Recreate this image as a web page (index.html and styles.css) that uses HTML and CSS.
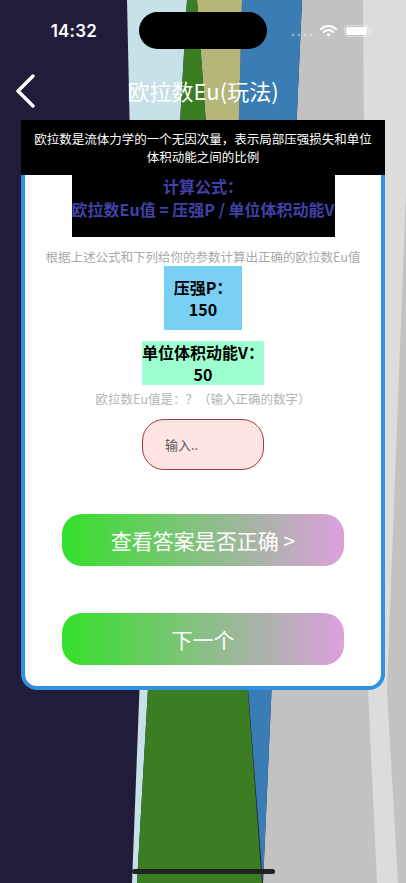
FILE: index.html
```html
<!DOCTYPE html>
<html lang="zh-CN">
<head>
<meta charset="UTF-8">
<meta name="viewport" content="width=device-width, initial-scale=1.0">
<title>欧拉数Eu(玩法)</title>
<link rel="stylesheet" href="styles.css">
</head>
<body>
<div class="screen">
    <!-- backdrop shards -->
    <svg class="backdrop" width="406" height="883" viewBox="0 0 406 883">
        <rect width="406" height="883" fill="#221c3b"/>
        <polygon points="302,0 406,0 406,883 263,883" fill="#c2c2c2"/>
        <polygon points="363,0 406,0 406,190 387,690 398,883 377,883 368,690" fill="#dcdcdc"/>
        <polygon points="242,0 302,0 263,883 230,455" fill="#3a7db4"/>
        <polygon points="197,0 242,0 230,455" fill="#b6b67b"/>
        <polygon points="127,0 187,0 137,883 132,883 141,650" fill="#c6e1e7"/>
        <polygon points="187,0 197,0 262,883 137,883" fill="#3a7d23"/>
    </svg>

    <div class="status-bar">
        <span class="clock">14:32</span>
        <div class="island"></div>
        <div class="status-icons">
            <svg width="22" height="6" viewBox="0 0 22 6">
                <circle cx="2" cy="3" r="1.6" fill="rgba(255,255,255,0.35)"/>
                <circle cx="8" cy="3" r="1.6" fill="rgba(255,255,255,0.35)"/>
                <circle cx="14" cy="3" r="1.6" fill="rgba(255,255,255,0.35)"/>
                <circle cx="20" cy="3" r="1.6" fill="rgba(255,255,255,0.35)"/>
            </svg>
            <svg width="17" height="12" viewBox="0 0 17 12">
                <path d="M1 4.2 A10.5 10.5 0 0 1 16 4.2" fill="none" stroke="#fff" stroke-width="2" stroke-linecap="round"/>
                <path d="M3.8 7 A6.6 6.6 0 0 1 13.2 7" fill="none" stroke="#fff" stroke-width="2" stroke-linecap="round"/>
                <path d="M6.2 9.6 L8.5 11.8 L10.8 9.6 A3.3 3.3 0 0 0 6.2 9.6 Z" fill="#fff"/>
            </svg>
            <svg width="28" height="12" viewBox="0 0 28 12">
                <rect x="0.5" y="0.5" width="24" height="11" rx="3.5" fill="none" stroke="rgba(255,255,255,0.45)"/>
                <rect x="2" y="2" width="21" height="8" rx="2.2" fill="#fff"/>
                <path d="M26 4 A2 2 0 0 1 26 8 Z" fill="rgba(255,255,255,0.45)"/>
            </svg>
        </div>
    </div>

    <div class="nav-bar">
        <svg class="back" width="22" height="34" viewBox="0 0 22 34">
            <polyline points="18,2 3,17 18,32" fill="none" stroke="#fff" stroke-width="3.4" stroke-linecap="round" stroke-linejoin="round"/>
        </svg>
        <h1 class="nav-title">欧拉数Eu(玩法)</h1>
    </div>

    <div class="intro">欧拉数是流体力学的一个无因次量，表示局部压强损失和单位体积动能之间的比例</div>

    <div class="card">
        <div class="formula">
            <div>计算公式：</div>
            <div>欧拉数Eu值 = 压强P / 单位体积动能V</div>
        </div>
        <p class="hint">根据上述公式和下列给你的参数计算出正确的欧拉数Eu值</p>
        <div class="param param-pressure">
            <div>压强P：</div>
            <div>150</div>
        </div>
        <div class="param param-energy">
            <div>单位体积动能V：</div>
            <div>50</div>
        </div>
        <p class="hint hint-answer">欧拉数Eu值是：？（输入正确的数字）</p>
        <input class="answer" type="text" placeholder="输入..">
        <button class="grad-button check">查看答案是否正确 &gt;</button>
        <button class="grad-button next">下一个</button>
    </div>

    <div class="home-bar"></div>
</div>
</body>
</html>
```

FILE: styles.css
```css
body {
    margin: 0;
    background-color: #221c3b;
    font-family: "Noto Sans CJK SC", "Noto Sans", sans-serif;
}
.screen {
    position: relative;
    width: 406px;
    height: 883px;
    overflow: hidden;
    display: flex;
    flex-direction: column;
}
.backdrop {
    position: absolute;
    left: 0;
    top: 0;
    z-index: 0;
}
.status-bar,
.nav-bar,
.intro,
.card,
.home-bar {
    position: relative;
    z-index: 1;
}
.status-bar {
    display: grid;
    grid-template-columns: 1fr 128px 1fr;
    align-items: center;
    padding-top: 12px;
    height: 37px;
}
.clock {
    justify-self: end;
    margin-right: 42px;
    color: white;
    font-family: Inter, "Liberation Sans", sans-serif;
    font-weight: 600;
    font-size: 17px;
    letter-spacing: 0.2px;
}
.island {
    width: 128px;
    height: 37px;
    border-radius: 19px;
    background-color: black;
}
.status-icons {
    display: flex;
    align-items: center;
    gap: 7px;
    padding-left: 24px;
    margin-top: 1px;
}
.status-icons svg:first-child {
    margin-top: 8px;
}
.nav-bar {
    margin-top: 11px;
    height: 60px;
    display: flex;
    align-items: center;
    justify-content: center;
}
.back {
    position: absolute;
    left: 15px;
    top: 14px;
}
.nav-title {
    margin: 0;
    color: white;
    font-size: 22px;
    font-weight: 400;
}
.intro {
    width: 348px;
    margin: 0 auto;
    padding: 10px 8px 9px;
    background-color: black;
    color: white;
    font-size: 12.5px;
    line-height: 18px;
    text-align: center;
}
.card {
    width: 356px;
    margin: 0 auto;
    padding-bottom: 21px;
    background-color: white;
    border: 4px solid #3091e2;
    border-top: none;
    border-radius: 0 0 16px 16px;
    display: flex;
    flex-direction: column;
    align-items: center;
}
.formula {
    width: 263px;
    padding-bottom: 16px;
    background-color: black;
    color: #4141a8;
    font-size: 16px;
    font-weight: 700;
    line-height: 23px;
    text-align: center;
    white-space: nowrap;
}
.hint {
    margin: 11px 0 0;
    color: #a9a9a9;
    font-size: 12.5px;
    line-height: 18px;
    text-align: center;
}
.param {
    color: black;
    font-size: 16px;
    font-weight: 700;
    line-height: 22px;
    text-align: center;
}
.param-pressure {
    padding: 10px;
    background-color: #7acff5;
}
.param-energy {
    margin-top: 11px;
    background-color: #9dffd0;
}
.hint-answer {
    margin-top: 5px;
    color: #b4b4b4;
}
.answer {
    box-sizing: border-box;
    width: 122px;
    height: 51px;
    margin-top: 11px;
    padding: 0 0 0 22px;
    border: 1px solid #a23a3a;
    border-radius: 22px;
    background-color: #ffe4e4;
    font-family: inherit;
    font-size: 13px;
    outline: none;
}
.answer::placeholder {
    color: #555;
}
.grad-button {
    width: 282px;
    height: 52px;
    border: none;
    border-radius: 20px;
    background: linear-gradient(to right, #33e02a, #dda0dd);
    color: white;
    font-family: inherit;
    font-size: 21px;
    cursor: pointer;
}
.check {
    margin-top: 44px;
}
.next {
    margin-top: 47px;
}
.home-bar {
    position: absolute;
    left: 132px;
    bottom: 9px;
    width: 143px;
    height: 5px;
    border-radius: 3px;
    background-color: #222;
}
```
